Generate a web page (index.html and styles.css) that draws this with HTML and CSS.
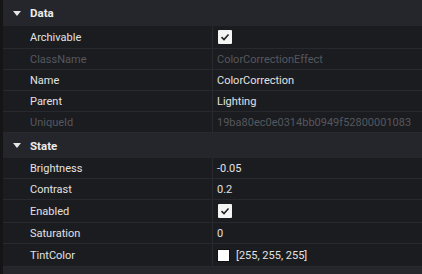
FILE: index.html
```html
<!DOCTYPE html>
<html>
<head>
<meta charset="utf-8">
<link rel="stylesheet" href="styles.css">
</head>
<body>
<div class="panel">
  <div class="section">
    <div class="head"><span class="tri"></span><span class="title">Data</span></div>
    <div class="row tall"><div class="name">Archivable</div><div class="val"><span class="check"><svg width="10" height="8" viewBox="0 0 10 8"><path d="M1.5 4.2 L4 6.5 L8.5 1.5" fill="none" stroke="#222" stroke-width="1.6"/></svg></span></div></div>
    <div class="row dim"><div class="name">ClassName</div><div class="val">ColorCorrectionEffect</div></div>
    <div class="row"><div class="name">Name</div><div class="val">ColorCorrection</div></div>
    <div class="row"><div class="name">Parent</div><div class="val">Lighting</div></div>
    <div class="row dim"><div class="name">UniqueId</div><div class="val">19ba80ec0e0314bb0949f52800001083</div></div>
  </div>
  <div class="section">
    <div class="head"><span class="tri"></span><span class="title">State</span></div>
    <div class="row"><div class="name">Brightness</div><div class="val">-0.05</div></div>
    <div class="row"><div class="name">Contrast</div><div class="val">0.2</div></div>
    <div class="row tall"><div class="name">Enabled</div><div class="val"><span class="check"><svg width="10" height="8" viewBox="0 0 10 8"><path d="M1.5 4.2 L4 6.5 L8.5 1.5" fill="none" stroke="#222" stroke-width="1.6"/></svg></span></div></div>
    <div class="row"><div class="name">Saturation</div><div class="val">0</div></div>
    <div class="row tall"><div class="name">TintColor</div><div class="val"><span class="swatch"></span><span class="ctext">[255, 255, 255]</span></div></div>
  </div>
</div>
</body>
</html>
```
FILE: styles.css
```css
html, body {
  margin: 0;
  padding: 0;
  background: #25262b;
}
body {
  width: 422px;
  height: 274px;
  overflow: hidden;
  font-family: Roboto, "Noto Sans", sans-serif;
  font-size: 11px;
  color: #e2e2e2;
}
.panel {
  border-left: 3px solid #151518;
  height: 274px;
  box-sizing: border-box;
}
.head {
  height: 26px;
  display: flex;
  align-items: center;
  background: #25262b;
}
.section + .section .head {
  height: 25px;
}
.tri {
  width: 0;
  height: 0;
  border-left: 4px solid transparent;
  border-right: 4px solid transparent;
  border-top: 5px solid #e6e6e6;
  margin-left: 10px;
  margin-right: 9px;
}
.title {
  font-weight: bold;
  color: #ececec;
  font-size: 11.5px;
}
.row {
  display: flex;
  height: 21px;
  background: #1b1c20;
  border-bottom: 1px solid #28292e;
  box-sizing: border-box;
  align-items: center;
}
.row.tall {
  height: 23px;
}
.name {
  width: 210px;
  padding-left: 27px;
  box-sizing: border-box;
  height: 100%;
  display: flex;
  align-items: center;
  border-right: 1px solid #28292e;
}
.val {
  flex: 1;
  padding-left: 4px;
  display: flex;
  align-items: center;
  height: 100%;
}
.dim .name, .dim .val {
  color: #55585e;
}
.check {
  width: 14px;
  height: 14px;
  background: #f4f4f4;
  border-radius: 1px;
  display: flex;
  align-items: center;
  justify-content: center;
  margin-left: 1px;
}
.swatch {
  width: 11px;
  height: 11px;
  background: #ffffff;
  border: 1px solid #111;
  margin-left: 0;
}
.ctext {
  margin-left: 6px;
}
```
